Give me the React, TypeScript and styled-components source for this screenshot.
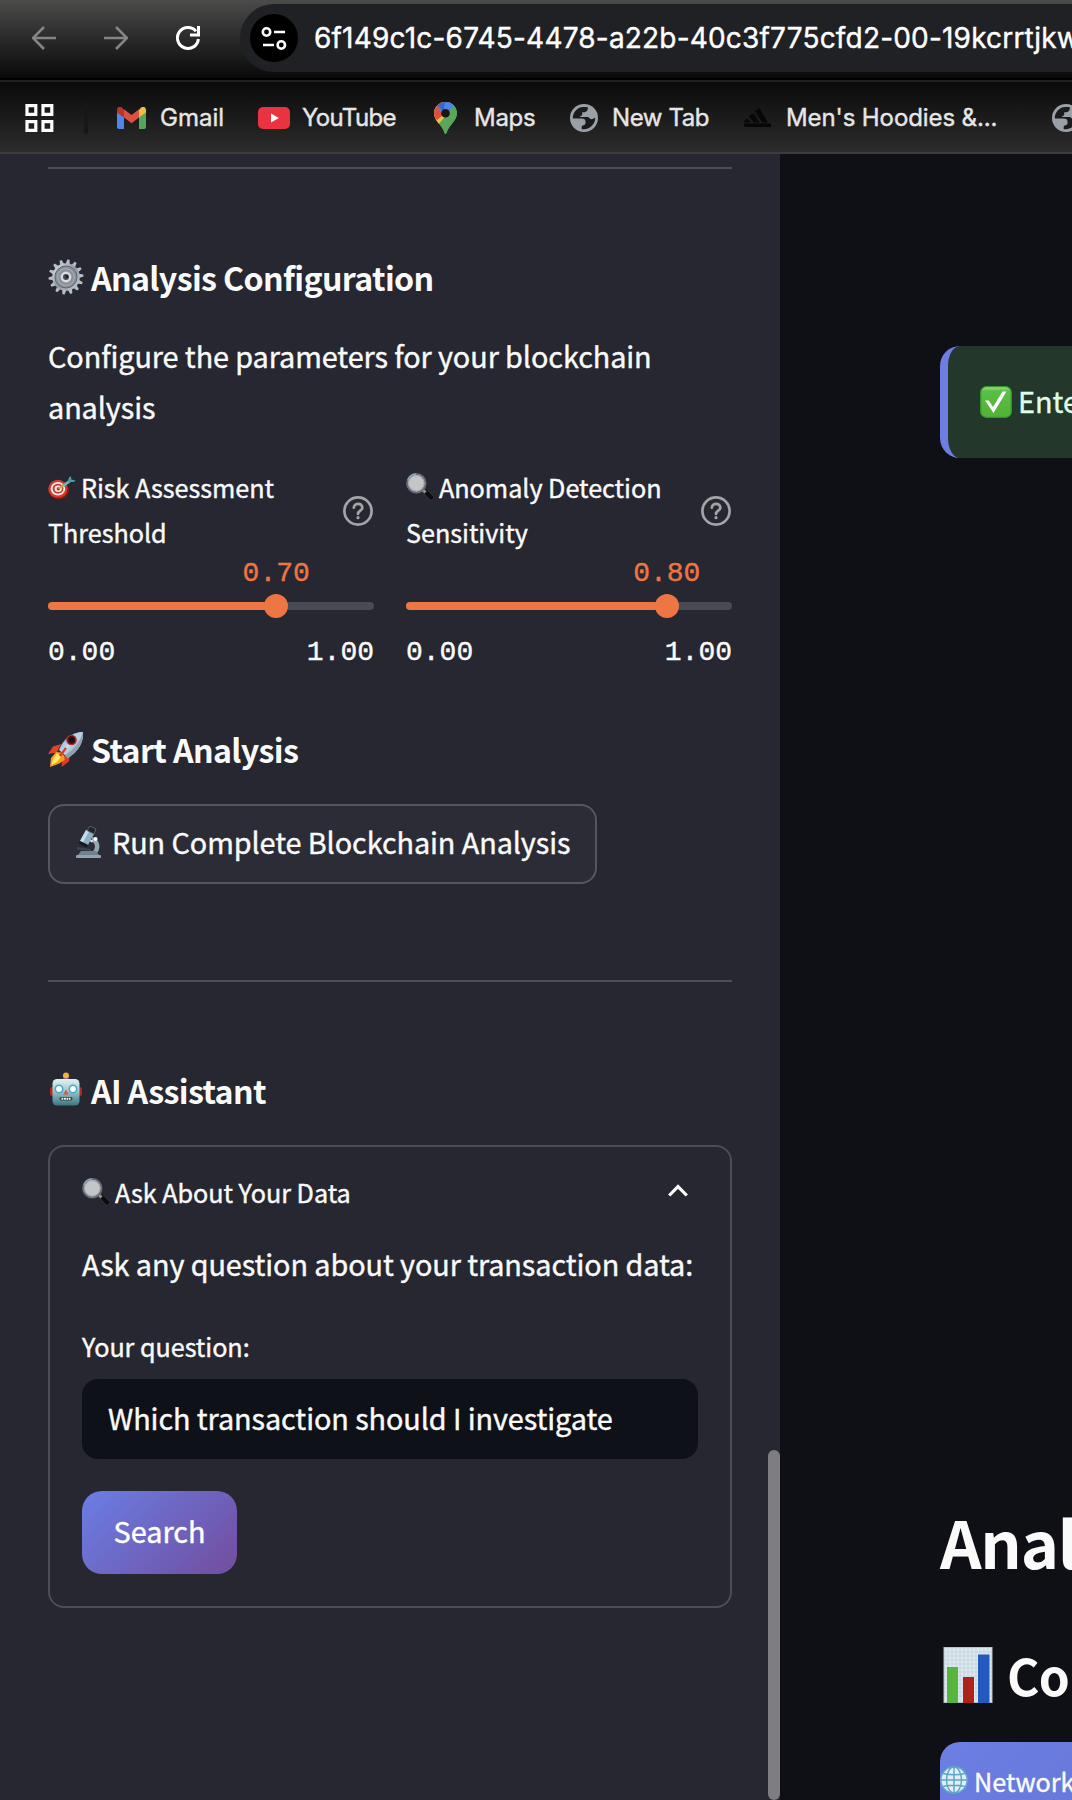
import React from "react";
import styled, { createGlobalStyle } from "styled-components";

const sans = `"Noto Sans CJK SC", "Noto Sans CJK JP", "Open Sans", sans-serif`;
const ui = `Inter, Roboto, "Liberation Sans", sans-serif`;
const mono = `"Liberation Mono", "DejaVu Sans Mono", monospace`;

const GlobalStyle = createGlobalStyle`
  * { box-sizing: border-box; }
  html, body { margin: 0; padding: 0; background: #0e1117; overflow: hidden; }
  h1, h2, h3, p { margin: 0; }
`;

const Page = styled.div`
  width: 1072px;
  height: 1800px;
  overflow: hidden;
  display: flex;
  flex-direction: column;
  color: #fafafa;
  font-family: ${sans};
  -webkit-text-stroke: 0.4px currentColor;
`;

/* ---------- browser chrome ---------- */

const Toolbar = styled.div`
  flex: none;
  height: 82px;
  padding: 4px 0 6px 32px;
  display: flex;
  align-items: flex-start;
  background: linear-gradient(#4b4b4a, #2c2c2c 45%, #0b0b0b 95%);
  border-bottom: 2px solid #212121;
  box-shadow: inset 0 -2px 0 #000;
`;

const NavButtons = styled.div`
  display: flex;
  gap: 48px;
  width: 208px;
  height: 68px;
  align-items: center;
  svg { display: block; flex: none; width: 24px; height: 24px; }
`;

const Omnibox = styled.div`
  flex: 1;
  height: 68px;
  min-width: 0;
  padding-left: 10px;
  display: flex;
  align-items: center;
  gap: 16px;
  background: #202124;
  border-radius: 34px 0 0 34px;
  overflow: hidden;
`;

const SiteInfo = styled.div`
  flex: none;
  width: 48px;
  height: 48px;
  border-radius: 50%;
  background: #000;
  display: grid;
  place-items: center;
`;

const Url = styled.span`
  font: 400 28px/34px ${ui};
  letter-spacing: 0.19px;
  white-space: nowrap;
  color: #fff;
`;

const Bookmarks = styled.div`
  flex: none;
  height: 72px;
  padding-left: 25px;
  display: flex;
  align-items: center;
  background: linear-gradient(#0a0a0a, #2c2c2c);
  border-bottom: 2px solid #3c3c3c;
  padding-top: 1px;
  overflow: hidden;
  svg { display: block; flex: none; }
`;

const Divider = styled.i`
  flex: none;
  width: 4px;
  height: 32px;
  margin: 0 29px 0 30px;
  border-radius: 2px;
  background: #171717;
`;

const Bookmark = styled.div<{ $width: number; $gap: number }>`
  flex: none;
  width: ${(p) => p.$width}px;
  display: flex;
  align-items: center;
  gap: ${(p) => p.$gap}px;
`;

const BookmarkName = styled.span<{ $spacing?: number }>`
  font: 400 24px/30px ${ui};
  letter-spacing: ${(p) => p.$spacing ?? 0}px;
  color: #e6e6e6;
  white-space: nowrap;
  padding-top: 1px;
`;

/* ---------- application ---------- */

const Content = styled.div`
  flex: 1;
  min-height: 0;
  display: flex;
`;

const Sidebar = styled.aside`
  flex: none;
  width: 780px;
  display: flex;
  justify-content: space-between;
  background: #262730;
`;

const SidebarBody = styled.div`
  width: 732px;
  padding: 13px 0 0 48px;
`;

const ScrollThumb = styled.div`
  align-self: flex-end;
  width: 12px;
  height: 350px;
  border-radius: 6px;
  background: #7e7d82;
`;

const Rule = styled.hr`
  margin: 0;
  border: 0;
  height: 2px;
  background: #4c4d56;
`;

const Heading = styled.h3<{ $top: number }>`
  margin-top: ${(p) => p.$top}px;
  font-weight: 700;
  font-size: 32.2px;
  line-height: 45px;
  letter-spacing: -0.65px;
  -webkit-text-stroke-width: 0;
  height: 43px;
  display: flex;
  white-space: nowrap;
  svg { flex: none; width: 36px; height: 36px; margin: 4px 7px 0 0; }
`;

const Text = styled.p<{ $top: number }>`
  margin-top: ${(p) => p.$top}px;
  font-size: 28.8px;
  font-weight: 400;
  line-height: 51.2px;
  letter-spacing: -0.08px;
`;

const Sliders = styled.div`
  margin-top: 32px;
  display: grid;
  grid-template-columns: 1fr 1fr;
  gap: 32px;
`;

const LabelRow = styled.div`
  display: flex;
  justify-content: space-between;
  align-items: center;
  height: 90px;
  > svg { flex: none; margin-right: 1px; margin-top: 4px; }
`;

const Label = styled.span`
  font-size: 25.2px;
  line-height: 45px;
  letter-spacing: -0.03px;
  white-space: nowrap;
  padding-top: 1px;
  svg { display: inline-block; vertical-align: -3px; margin-right: 5px; }
`;

const Track = styled.div`
  position: relative;
  height: 8px;
  margin-top: 48px;
  border-radius: 4px;
  background: #484a54;
`;

const Fill = styled.div`
  height: 8px;
  border-radius: 4px;
  background: #ee7544;
`;

const Thumb = styled.div`
  position: absolute;
  top: -8px;
  width: 24px;
  height: 24px;
  border-radius: 50%;
  background: #ee7544;
  transform: translateX(-50%);
`;

const Value = styled.span`
  position: absolute;
  top: -45px;
  transform: translateX(-50%);
  font: 400 28px/34px ${mono};
  color: #ee7544;
`;

const Ticks = styled.div`
  margin-top: 26px;
  display: flex;
  justify-content: space-between;
  font: 400 28px/34px ${mono};
  color: #fafafa;
`;

const RunButton = styled.button`
  margin: 34px 0 96px;
  width: 549px;
  height: 80px;
  padding: 0 0 4px 26px;
  display: flex;
  align-items: center;
  gap: 11px;
  border: 2px solid #55565f;
  border-radius: 16px;
  background: #2b2c36;
  color: #fafafa;
  font: 400 28.8px/48px ${sans};
  letter-spacing: -0.08px;
  -webkit-text-stroke: inherit;
  white-space: nowrap;
  svg { flex: none; }
`;

const Expander = styled.section`
  margin-top: 34px;
  height: 463px;
  padding: 22px 32px 0;
  border: 2px solid #4c4d56;
  border-radius: 16px;
`;

const Summary = styled.div`
  display: flex;
  justify-content: space-between;
  height: 45px;
  padding-right: 10px;
  > svg { margin-top: 15px; }
`;

const FieldLabel = styled.label`
  display: block;
  margin-top: 34px;
  font-size: 25.2px;
  line-height: 45px;
  letter-spacing: -0.05px;
`;

const Field = styled.div`
  margin-top: 10px;
  height: 80px;
  padding: 0 26px;
  border-radius: 16px;
  background: #0e1117;
  font-size: 28.8px;
  line-height: 78px;
  letter-spacing: -0.08px;
  white-space: nowrap;
`;

const SearchButton = styled.button`
  margin-top: 32px;
  width: 155px;
  height: 83px;
  padding: 0 0 3px;
  border: 0;
  border-radius: 20px;
  background: linear-gradient(135deg, #6a7ee5 0%, #724d9e 100%);
  color: #fff;
  font: 400 28.8px/48px ${sans};
  -webkit-text-stroke: inherit;
`;

const Main = styled.main`
  flex: 1;
  min-width: 0;
  padding: 192px 0 0 160px;
  overflow: hidden;
  background: #0e1015;
  white-space: nowrap;
`;

const Alert = styled.div`
  height: 112px;
  padding: 0 0 3px 32px;
  display: flex;
  align-items: center;
  gap: 6px;
  border-left: 8px solid #6c7ee2;
  border-radius: 20px 0 0 20px;
  background: #23372b;
  color: #dffde8;
  font-size: 28.8px;
  svg { flex: none; margin-top: 2px; }
`;

const Title = styled.h1`
  margin-top: 1033px;
  font-size: 64.8px;
  line-height: 100px;
  font-weight: 700;
  letter-spacing: -1.2px;
  -webkit-text-stroke-width: 0;
`;

const Subtitle = styled.h2`
  margin-top: 43px;
  height: 80px;
  display: flex;
  align-items: center;
  gap: 14px;
  padding-left: 3px;
  font-size: 49.6px;
  line-height: 80px;
  font-weight: 700;
  letter-spacing: -0.9px;
  -webkit-text-stroke-width: 0;
  svg { flex: none; margin-top: 1px; }
`;

const Metric = styled.div`
  margin-top: 28px;
  height: 90px;
  padding-top: 17px;
  display: flex;
  gap: 6px;
  background: linear-gradient(135deg, #6c7fe4, #6876d8);
  border-radius: 20px 0 0 0;
  font-size: 25.2px;
  line-height: 45px;
  svg { flex: none; margin-top: 7px; }
`;

/* ---------- drawings ---------- */

const Arrow = ({ flip }: { flip?: boolean }) => (
  <svg viewBox="0 0 24 24" fill="none" stroke="#858585" strokeWidth="2.6">
    <path d={flip ? "M0 12H22M12 1l11 11-11 11" : "M24 12H2M12 1L1 12l11 11"} />
  </svg>
);

const Reload = () => (
  <svg viewBox="0 0 24 24" fill="none" stroke="#fff" strokeWidth="3">
    <path d="M22.400 13A10.500 10.500 0 1 1 20 5.200M22.500 0v9H14" />
  </svg>
);

const Tune = () => (
  <svg width="26" height="26" viewBox="0 0 26 26" fill="none" stroke="#fff" strokeWidth="2.6">
    <circle cx="5.500" cy="7" r="3.700" />
    <path d="M13 7h11M2 20h11" />
    <circle cx="20.300" cy="20" r="3.700" />
  </svg>
);

const AppsGrid = () => (
  <svg width="29" height="28" viewBox="0 0 29 28" fill="none" stroke="#fff" strokeWidth="3.2">
    <path d="M2 1.600h8.800v8.800H2zM18 1.600h8.800v8.800H18zM2 17.600h8.800v8.800H2zM18 17.600h8.800v8.800H18z" />
  </svg>
);

const Gmail = () => (
  <svg width="29" height="22" viewBox="0 0 29 22">
    <path d="M0 5l7 5v12H2a2 2 0 0 1-2-2z" fill="#4f86ee" />
    <path d="M29 5l-7 5v12h5a2 2 0 0 0 2-2z" fill="#53a65a" />
    <path d="M22 3v7.500l7-5V3c0-3-3-4-5.200-2.200z" fill="#f3bd42" />
    <path d="M7 3v7.500l-7-5V3C0 0 3-1 5.200.8z" fill="#b9352b" />
    <path d="M7 2.200l7.500 5.700L22 2.200v8.300l-7.500 5.700L7 10.500z" fill="#dd5144" />
  </svg>
);

const YouTube = () => (
  <svg width="32" height="22" viewBox="0 0 32 22">
    <rect width="32" height="22" rx="5" fill="#ea3340" />
    <path d="M13 6.500l7.800 4.500-7.800 4.500z" fill="#fff" />
  </svg>
);

const MapPin = () => (
  <svg width="23" height="32" viewBox="0 0 23 32">
    <defs>
      <clipPath id="pin">
        <path d="M11.500 0A11.300 11.300 0 0 1 23 11.300c0 4-2.200 7-4.500 10C15.500 25 13.500 27.500 12.700 31c-.3 1.300-2.100 1.300-2.400 0C9.500 27.500 7.500 25 4.500 21.300 2.200 18.300 0 15.300 0 11.300A11.300 11.300 0 0 1 11.500 0z" />
      </clipPath>
    </defs>
    <g clipPath="url(#pin)">
      <rect width="23" height="32" fill="#5aa75c" />
      <path d="M0 0h23L3 24H0z" fill="#f2bd42" />
      <path d="M-1 0h18L8 14l-5 4-4-4z" fill="#dc5044" />
      <path d="M3 3.500L11 -1h12v6L8.500 12z" fill="#4c83ec" />
      <path d="M3 3.500L11 -1h5l-7 10z" fill="#3a66c8" />
      <path d="M19 2l6 10-14 20V22l-2-4z" fill="#5aa75c" />
      <path d="M11 0l9 2.500-4.500 6-6 1z" fill="#4c83ec" />
    </g>
    <circle cx="11.500" cy="11.300" r="4.300" fill="#171717" />
  </svg>
);

const Earth = () => (
  <svg width="28" height="28" viewBox="0 0 28 28">
    <circle cx="14" cy="14" r="14" fill="#9ba0a8" />
    <path
      d="M2.800 14.600C2.600 8.500 7 3.400 13 3h4.500C18.500 5.500 17 7.800 14.500 8.200h-2.300v2.400c0 1-.8 1.400-1.900 1.400v.9h7c1 0 1.500.4 2 1.200 1.200 1.600 3.500 1.300 5.900-.6C25.500 19.700 20.500 25 14 25.200h-2.300v-2.700c0-1.500 3.800-1 3.800-3.300v-1.400c0-2-1.300-3.200-3.700-3.200z"
      fill="#1b1b1b"
    />
  </svg>
);

const Stripes = () => (
  <svg width="28" height="20" viewBox="0 0 28 20" fill="#070707">
    <path d="M11 3l4.500-3L24 14.500h-6zM5 8l4.500-3 6 9.500h-6zM0 13l3.500-2.500L7 14.500H0zM0 15.500h27v3.500H0z" />
  </svg>
);

const Gear = () => (
  <svg viewBox="0 0 36 36">
    <defs>
      <linearGradient id="steel" x1="0" y1="0" x2="1" y2="1">
        <stop offset="0" stopColor="#dfe6ec" />
        <stop offset=".5" stopColor="#8e979f" />
        <stop offset="1" stopColor="#c9d0d6" />
      </linearGradient>
    </defs>
    <g fill="#b6bec6">
      {Array.from({ length: 14 }, (_, i) => (
        <path key={i} d="M15.900 5l1-4.500h2.200l1 4.500z" transform={`rotate(${i * 25.714 + 8} 18 18)`} />
      ))}
    </g>
    <circle cx="18" cy="18" r="13.800" fill="url(#steel)" />
    <circle cx="18" cy="18" r="11" fill="#8b9299" stroke="#60676e" strokeWidth="1" />
    <circle cx="18" cy="18" r="8.300" fill="none" stroke="#a8afb6" strokeWidth="1" />
    <circle cx="18" cy="18" r="4.200" fill="#4a4a4c" stroke="#d6dce2" strokeWidth="2.400" />
    <path d="M17 16h3v3h-2z" fill="#25262c" />
  </svg>
);

const Dart = () => (
  <svg width="28" height="28" viewBox="0 0 28 28">
    <ellipse cx="10.800" cy="17" rx="10.300" ry="9.200" fill="#8e1712" />
    <ellipse cx="9.900" cy="15.800" rx="9.700" ry="9" fill="#d3392d" />
    <ellipse cx="9.900" cy="15.800" rx="7.300" ry="6.800" fill="#f5eeee" />
    <ellipse cx="10" cy="15.800" rx="5.400" ry="5" fill="#cf3a30" />
    <ellipse cx="10.200" cy="15.800" rx="3.600" ry="3.300" fill="#f5eeee" />
    <circle cx="10.400" cy="15.800" r="1.700" fill="#b92920" />
    <path d="M10.500 15.500l5.500-3.700" stroke="#d9a63c" strokeWidth="2" />
    <path d="M15 12.800l7-5" stroke="#63b7bd" strokeWidth="2.800" />
    <path d="M19.500 9l1.500-4.500 2-1.500.3 3.500 4.400 1-2 1.500z" fill="#4b9aa5" />
  </svg>
);

const Magnifier = () => (
  <svg width="28" height="28" viewBox="0 0 28 28">
    <path d="M17 17l3-1.500 7.500 8c1 2-1.500 4-3.500 3.500L16.500 19z" fill="#0d0d0f" stroke="#444" strokeWidth=".7" />
    <path d="M16 16l3.500 3.500" stroke="#8d949a" strokeWidth="3" />
    <circle cx="10.300" cy="10.300" r="9.200" fill="#c4c5c7" stroke="#677079" strokeWidth="2" />
    <circle cx="10.300" cy="10.300" r="7.700" fill="none" stroke="#a6a8ab" strokeWidth="1" />
    <path d="M2 7A9 9 0 0 1 10 1" fill="none" stroke="#8da3b8" strokeWidth="1.500" />
  </svg>
);

const Rocket = () => (
  <svg viewBox="0 0 36 36">
    <defs>
      <linearGradient id="hull" x1="0" y1="0" x2="1" y2="1">
        <stop offset="0" stopColor="#4c7db5" />
        <stop offset=".45" stopColor="#c9dcec" />
        <stop offset="1" stopColor="#667685" />
      </linearGradient>
    </defs>
    <path d="M13 13L5 15.500 0 23l9-1.500z" fill="#e0432b" />
    <path d="M22 22l-1 8.500-7.500 5.500 1-9z" fill="#dc3d28" />
    <path d="M8 21l5 .500 3.500 3.500 0 4-5 3.500L2 36l1-9z" fill="#f59b2a" />
    <path d="M9 22l4 4-4 5-5.500 3 1.500-6z" fill="#ffe95c" />
    <path d="M35 1c.800 10-4 19-15 26l-9-8C15 8 24 1.500 35 1z" fill="url(#hull)" />
    <path d="M35 1c-4 .1-7 .8-10 2.500L32.500 11C34.500 8 35.200 4.500 35 1z" fill="#b9cfe6" />
    <path d="M35 1c.800 10-4 19-15 26l-3-3c9-5 15-13 18-23z" fill="#8fa0b0" />
    <circle cx="23.500" cy="9" r="4.600" fill="#4a1114" stroke="#b52c2c" strokeWidth="1.400" />
    <circle cx="23.800" cy="8.800" r="2.600" fill="#151214" />
    <path d="M18 17l-6 8" stroke="#d7402b" strokeWidth="2.400" />
  </svg>
);

const Microscope = () => (
  <svg width="25" height="32" viewBox="0 0 25 32">
    <path d="M16 11c7 2 9.500 9 5.500 15.500h-6c4.500-3 4.500-9 .500-10.500z" fill="#94a7b2" />
    <rect x="0" y="29" width="25" height="3" rx="1" fill="#8fa5b1" />
    <path d="M5 25h15l3 4H2z" fill="#6e828e" />
    <path d="M1 21l14 2v2L1 23.500z" fill="#3b444c" />
    <path d="M10 4l8 4-6 11-8-4z" fill="#8fafc8" />
    <path d="M10 4l3 1.500-6 11L4 15z" fill="#c8dbe8" />
    <path d="M4 15l8 4-1.500 2.500-7.500-4z" fill="#15181c" />
    <path d="M14 0l6 3-2 5-7-3.500z" fill="#20252a" stroke="#66727c" strokeWidth=".8" />
    <circle cx="19.500" cy="13" r="2" fill="#fff" />
    <circle cx="15.500" cy="15" r="1.300" fill="#dfe8ee" />
  </svg>
);

const Robot = () => (
  <svg viewBox="0 0 36 36">
    <defs>
      <linearGradient id="face" x1="0" y1="0" x2="0" y2="1">
        <stop offset="0" stopColor="#dff3f2" />
        <stop offset=".4" stopColor="#a5cfd1" />
        <stop offset="1" stopColor="#3d7580" />
      </linearGradient>
    </defs>
    <rect x="2" y="15" width="4" height="9" rx="2" fill="#b52725" />
    <rect x="30" y="15" width="4" height="9" rx="2" fill="#b52725" />
    <rect x="15" y="4" width="6" height="4" rx="1" fill="#64447f" />
    <circle cx="18" cy="3.500" r="3" fill="#f4b13a" />
    <rect x="4.500" y="7" width="27" height="26.500" rx="4.500" fill="url(#face)" />
    <circle cx="11" cy="17" r="3.700" fill="#fff" stroke="#45a9c8" strokeWidth="1.600" />
    <circle cx="25" cy="17" r="3.700" fill="#fff" stroke="#45a9c8" strokeWidth="1.600" />
    <path d="M18 17.500l2.700 5h-5.400z" fill="#dc5145" />
    <rect x="11.500" y="25" width="13" height="3.400" rx="1.700" fill="#2b3e43" />
    <path d="M13.500 26.700h9" stroke="#fff" strokeWidth="2" strokeDasharray="1.800 .7" />
  </svg>
);

const Help = () => (
  <svg width="30" height="30" viewBox="0 0 30 30" fill="none" stroke="#a3a3a8" strokeWidth="2.700">
    <circle cx="15" cy="15" r="13.600" />
    <path d="M10.800 11.700c.2-5.400 8.600-5 8.500 0 0 3-4.200 3-4.300 6.200" strokeLinecap="round" />
    <circle cx="15" cy="21.700" r="1.600" fill="#a3a3a8" stroke="none" />
  </svg>
);

const Chevron = () => (
  <svg width="20" height="13" viewBox="0 0 20 13" fill="none" stroke="#fafafa" strokeWidth="3.200">
    <path d="M1.200 11.500L10 2.600l8.800 8.900" />
  </svg>
);

const Check = () => (
  <svg width="32" height="32" viewBox="0 0 32 32">
    <defs>
      <linearGradient id="green" x1="0" y1="0" x2="0" y2="1">
        <stop offset="0" stopColor="#a5e292" />
        <stop offset=".14" stopColor="#5abf45" />
        <stop offset="1" stopColor="#52b234" />
      </linearGradient>
    </defs>
    <rect x=".7" y=".7" width="30.600" height="30.600" rx="5.500" fill="url(#green)" stroke="#35962b" strokeWidth="1.200" />
    <path d="M5 14.500h3.800l4.200 6.500L22.500 5.500H26.500L13.500 27z" fill="#fff" />
  </svg>
);

const Chart = () => (
  <svg width="50" height="56" viewBox="0 0 50 56">
    <rect x="1" y=".5" width="48" height="55" fill="#dfe8ef" stroke="#b9c2c9" />
    <path
      d="M5 1v54M9 1v54M13 1v54M17 1v54M21 1v54M25 1v54M29 1v54M33 1v54M37 1v54M41 1v54M45 1v54M1 5h48M1 9h48M1 13h48M1 17h48M1 21h48M1 25h48M1 29h48M1 33h48M1 37h48M1 41h48M1 45h48M1 49h48"
      stroke="#bdd0dd" strokeWidth=".7"
    />
    <rect x="4" y="20" width="11" height="36" fill="#56b53c" />
    <rect x="20" y="30" width="11" height="26" fill="#ad2318" />
    <rect x="35" y="7.500" width="11.500" height="48.500" fill="#2459bd" />
  </svg>
);

const Globe = () => (
  <svg width="28" height="28" viewBox="0 0 28 28" fill="none">
    <circle cx="14" cy="14" r="13.200" fill="#e3edf7" stroke="#62a9cb" strokeWidth="1.500" />
    <g stroke="#5ba4c4" strokeWidth="1.400">
      <ellipse cx="14" cy="14" rx="7.500" ry="13" />
      <path d="M14 1v26M1 14h26M3 7.500q11 2.500 22 0M3 20.500q11 -2.500 22 0" />
    </g>
  </svg>
);

/* ---------- pieces ---------- */

type SliderProps = { icon: React.ReactNode; lines: [string, string]; value: number };

const Slider = ({ icon, lines, value }: SliderProps) => (
  <div>
    <LabelRow>
      <Label>
        {icon}
        {lines[0]}
        <br />
        {lines[1]}
      </Label>
      <Help />
    </LabelRow>
    <Track>
      <Fill style={{ width: `${value * 100}%` }} />
      <Thumb style={{ left: `${value * 100}%` }} />
      <Value style={{ left: `${value * 100}%` }}>{value.toFixed(2)}</Value>
    </Track>
    <Ticks>
      <span>0.00</span>
      <span>1.00</span>
    </Ticks>
  </div>
);

export default function App() {
  return (
    <Page>
      <GlobalStyle />
      <Toolbar>
        <NavButtons>
          <Arrow />
          <Arrow flip />
          <Reload />
        </NavButtons>
        <Omnibox>
          <SiteInfo><Tune /></SiteInfo>
          <Url>6f149c1c-6745-4478-a22b-40c3f775cfd2-00-19kcrrtjkw</Url>
        </Omnibox>
      </Toolbar>
      <Bookmarks>
        <AppsGrid />
        <Divider />
        <Bookmark $width={141} $gap={14}><Gmail /><BookmarkName>Gmail</BookmarkName></Bookmark>
        <Bookmark $width={176} $gap={12}><YouTube /><BookmarkName $spacing={-0.65}>YouTube</BookmarkName></Bookmark>
        <Bookmark $width={136} $gap={17}><MapPin /><BookmarkName $spacing={-0.3}>Maps</BookmarkName></Bookmark>
        <Bookmark $width={174} $gap={14}><Earth /><BookmarkName $spacing={-0.4}>New Tab</BookmarkName></Bookmark>
        <Bookmark $width={308} $gap={14}><Stripes /><BookmarkName $spacing={-0.1}>Men's Hoodies &amp;...</BookmarkName></Bookmark>
        <Earth />
      </Bookmarks>
      <Content>
        <Sidebar>
          <SidebarBody>
            <Rule />
            <Heading $top={86}><Gear />Analysis Configuration</Heading>
            <Text $top={32}>Configure the parameters for your blockchain<br />analysis</Text>
            <Sliders>
              <Slider icon={<Dart />} lines={["Risk Assessment", "Threshold"]} value={0.7} />
              <Slider icon={<Magnifier />} lines={["Anomaly Detection", "Sensitivity"]} value={0.8} />
            </Sliders>
            <Heading $top={57}><Rocket />Start Analysis</Heading>
            <RunButton><Microscope />Run Complete Blockchain Analysis</RunButton>
            <Rule />
            <Heading $top={86}><Robot />AI Assistant</Heading>
            <Expander>
              <Summary>
                <Label><Magnifier />Ask About Your Data</Label>
                <Chevron />
              </Summary>
              <Text $top={24}>Ask any question about your transaction data:</Text>
              <FieldLabel>Your question:</FieldLabel>
              <Field>Which transaction should I investigate</Field>
              <SearchButton>Search</SearchButton>
            </Expander>
          </SidebarBody>
          <ScrollThumb />
        </Sidebar>
        <Main>
          <Alert><Check />Ente</Alert>
          <Title>Anal</Title>
          <Subtitle><Chart />Co</Subtitle>
          <Metric><Globe />Network</Metric>
        </Main>
      </Content>
    </Page>
  );
}
